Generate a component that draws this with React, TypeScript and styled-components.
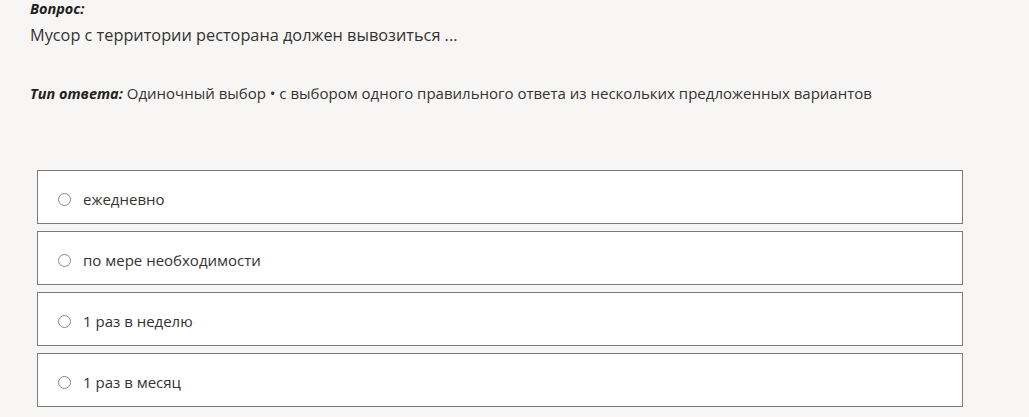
import styled, { createGlobalStyle } from "styled-components";

const GlobalStyle = createGlobalStyle`
  html, body {
    margin: 0;
    padding: 0;
    background: #f7f6f4;
  }
  body {
    font-family: "Open Sans", "Noto Sans", sans-serif;
    color: #333;
  }
`;

const options = [
  "ежедневно",
  "по мере необходимости",
  "1 раз в неделю",
  "1 раз в месяц",
];

function App() {
  return (
    <>
      <GlobalStyle />
      <Page>
        <Header>
          <Caption>
            <Label>Вопрос:</Label>
          </Caption>
          <Question>Мусор с территории ресторана должен вывозиться ...</Question>
          <AnswerType>
            <Label>Тип ответа:</Label> Одиночный выбор • с выбором одного
            правильного ответа из нескольких предложенных вариантов
          </AnswerType>
        </Header>
        <OptionList>
          {options.map((text) => (
            <Option key={text}>
              <Radio />
              <span>{text}</span>
            </Option>
          ))}
        </OptionList>
      </Page>
    </>
  );
}

const Page = styled.div`
  width: 1029px;
  height: 417px;
  overflow: hidden;
`;

const Header = styled.div`
  padding-left: 30px;
`;

const Caption = styled.div`
  font-size: 14.5px;
  line-height: 18px;
`;

const Label = styled.b`
  font-weight: 700;
  font-style: italic;
  color: #222;
`;

const Question = styled.div`
  font-size: 16.3px;
  line-height: 24px;
  margin-top: 5px;
  color: #333;
`;

const AnswerType = styled.div`
  font-size: 15px;
  line-height: 22px;
  margin-top: 35px;
  color: #333;

  ${Label} {
    font-size: 14.5px;
  }
`;

const OptionList = styled.div`
  display: flex;
  flex-direction: column;
  gap: 7px;
  margin: 65px 0 0 37px;
  width: 926px;
`;

const Option = styled.label`
  box-sizing: border-box;
  display: flex;
  align-items: center;
  gap: 12px;
  height: 54px;
  padding: 4px 20px 0;
  background: #fff;
  border: 1px solid #7a7a7a;
  font-size: 15px;
  color: #333;
`;

const Radio = styled.span`
  width: 11px;
  height: 11px;
  border: 1px solid #888;
  border-radius: 50%;
  background: #fff;
  flex-shrink: 0;
`;

export default App;
